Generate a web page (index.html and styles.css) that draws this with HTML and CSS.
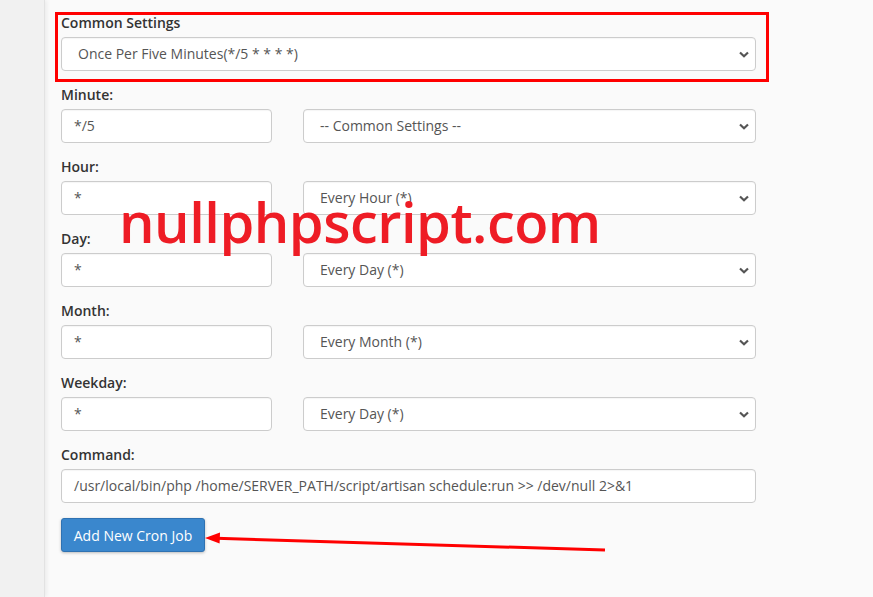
FILE: index.html
```html
<!DOCTYPE html>
<html>
<head>
<meta charset="utf-8">
<link rel="stylesheet" href="styles.css">
</head>
<body>
<div class="page">
  <aside class="sidebar"></aside>
  <main class="main">
    <form class="cron-form">
      <div class="group highlighted">
        <label class="label">Common Settings</label>
        <div class="select">Once Per Five Minutes(*/5 * * * *)<svg class="chev" width="10" height="7" viewBox="0 0 10 7"><path d="M1 1.5 L5 5.2 L9 1.5" fill="none" stroke="#555" stroke-width="2.2"/></svg></div>
        <div class="highlight-box"></div>
      </div>
      <div class="group">
        <label class="label">Minute:</label>
        <div class="row">
          <div class="input">*/5</div>
          <div class="select">-- Common Settings --<svg class="chev" width="10" height="7" viewBox="0 0 10 7"><path d="M1 1.5 L5 5.2 L9 1.5" fill="none" stroke="#555" stroke-width="2.2"/></svg></div>
        </div>
      </div>
      <div class="group">
        <label class="label">Hour:</label>
        <div class="row">
          <div class="input">*</div>
          <div class="select">Every Hour (*)<svg class="chev" width="10" height="7" viewBox="0 0 10 7"><path d="M1 1.5 L5 5.2 L9 1.5" fill="none" stroke="#555" stroke-width="2.2"/></svg></div>
        </div>
      </div>
      <div class="group">
        <label class="label">Day:</label>
        <div class="row">
          <div class="input">*</div>
          <div class="select">Every Day (*)<svg class="chev" width="10" height="7" viewBox="0 0 10 7"><path d="M1 1.5 L5 5.2 L9 1.5" fill="none" stroke="#555" stroke-width="2.2"/></svg></div>
        </div>
      </div>
      <div class="group">
        <label class="label">Month:</label>
        <div class="row">
          <div class="input">*</div>
          <div class="select">Every Month (*)<svg class="chev" width="10" height="7" viewBox="0 0 10 7"><path d="M1 1.5 L5 5.2 L9 1.5" fill="none" stroke="#555" stroke-width="2.2"/></svg></div>
        </div>
      </div>
      <div class="group">
        <label class="label">Weekday:</label>
        <div class="row">
          <div class="input">*</div>
          <div class="select">Every Day (*)<svg class="chev" width="10" height="7" viewBox="0 0 10 7"><path d="M1 1.5 L5 5.2 L9 1.5" fill="none" stroke="#555" stroke-width="2.2"/></svg></div>
        </div>
      </div>
      <div class="group">
        <label class="label">Command:</label>
        <div class="input wide">/usr/local/bin/php /home/SERVER_PATH/script/artisan schedule:run &gt;&gt; /dev/null 2&gt;&amp;1</div>
      </div>
      <div class="actions">
        <button type="button" class="btn">Add New Cron Job</button>
      </div>
    </form>
    <div class="watermark">nullphpscript.com</div>
    <svg class="arrow" width="873" height="597" viewBox="0 0 873 597">
      <line x1="605" y1="550" x2="216" y2="538.3" stroke="#f00" stroke-width="3"/>
      <path d="M205 538 L220 532.5 L219.6 543.5 Z" fill="#f00"/>
    </svg>
  </main>
</div>
</body>
</html>
```
FILE: styles.css
```css
* { box-sizing: border-box; }
html, body { margin: 0; padding: 0; }
body {
  font-family: "Open Sans", "Liberation Sans", sans-serif;
  font-size: 14px;
  color: #333;
  background: #fafafa;
  width: 873px;
  height: 597px;
  overflow: hidden;
}
.page {
  display: flex;
  height: 597px;
}
.sidebar {
  width: 45px;
  flex: none;
  background: #f1f1f1;
  border-right: 1px solid #e2e2e2;
  box-shadow: 2px 0 4px rgba(0,0,0,0.06);
}
.main {
  flex: 1;
  padding: 12px 0 0 16px;
}
.cron-form {
  width: 695px;
}
.group {
  margin-bottom: 13px;
  position: relative;
}
.label {
  display: block;
  font-weight: 600;
  line-height: 20px;
  height: 21px;
  padding-top: 1px;
  margin-bottom: 4px;
  color: #333;
}
.row {
  display: grid;
  grid-template-columns: 211px 1fr;
  column-gap: 31px;
}
.input, .select {
  height: 34px;
  line-height: 32px;
  border: 1px solid #ccc;
  border-radius: 4px;
  background: #fff;
  color: #555;
  white-space: nowrap;
  box-shadow: inset 0 1px 1px rgba(0,0,0,0.04);
}
.input { padding: 0 12px; }
.input.wide { width: 695px; }
.select {
  position: relative;
  padding: 0 16px;
}
.chev {
  position: absolute;
  right: 6px;
  top: 13px;
}
.highlight-box {
  position: absolute;
  left: -6px;
  top: 0;
  width: 714px;
  height: 70px;
  border: 3px solid #f00;
  pointer-events: none;
}
.actions {
  padding-top: 2px;
}
.btn {
  font-family: "Open Sans", "Liberation Sans", sans-serif;
  font-size: 14px;
  color: #fff;
  background: #3a87cd;
  border: 1px solid #2f72b2;
  border-radius: 3px;
  height: 34px;
  width: 144px;
  padding: 0;
  box-shadow: 0 1px 3px rgba(0,0,0,0.25);
}
.watermark {
  position: absolute;
  left: 119px;
  top: 183px;
  font-family: "Open Sans", sans-serif;
  font-weight: 600;
  font-size: 56px;
  line-height: 76px;
  color: #ee1c25;
  letter-spacing: -0.5px;
}
.arrow {
  position: absolute;
  left: 0;
  top: 0;
  pointer-events: none;
}
```
